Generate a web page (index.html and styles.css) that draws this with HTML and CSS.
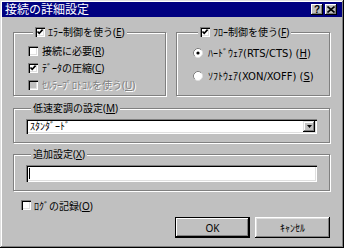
FILE: index.html
```html
<!DOCTYPE html>
<html lang="ja">
<head>
<meta charset="utf-8">
<link rel="stylesheet" href="styles.css">
</head>
<body>
<div class="window">
  <div class="titlebar">
    <span class="title">接続の詳細設定</span>
    <div class="tbtns">
      <span class="tbtn help">?</span>
      <span class="tbtn close"><svg width="8" height="7" viewBox="0 0 8 7"><path d="M0.5 0.5 L7.5 6.5 M7.5 0.5 L0.5 6.5" stroke="#000" stroke-width="1.6"/></svg></span>
    </div>
  </div>
  <div class="body">
    <div class="row">
      <fieldset class="group g1">
        <legend><span class="cb"><svg viewBox="0 0 10 10"><path d="M2.5 4.5 L4.2 6.4 L7.6 2.6" fill="none" stroke="#000" stroke-width="1.6"/></svg></span><span class="lbl">ｴﾗｰ制御を使う(<u>E</u>)</span></legend>
        <div class="item"><span class="cb"></span><span class="lbl">接続に必要(<u>R</u>)</span></div>
        <div class="item"><span class="cb"><svg viewBox="0 0 10 10"><path d="M2.5 4.5 L4.2 6.4 L7.6 2.6" fill="none" stroke="#000" stroke-width="1.6"/></svg></span><span class="lbl">ﾃﾞｰﾀの圧縮(<u>C</u>)</span></div>
        <div class="item disabled"><span class="cb off"></span><span class="lbl">ｾﾙﾗｰﾌﾟﾛﾄｺﾙを使う(<u>U</u>)</span></div>
      </fieldset>
      <fieldset class="group g2">
        <legend><span class="cb"><svg viewBox="0 0 10 10"><path d="M2.5 4.5 L4.2 6.4 L7.6 2.6" fill="none" stroke="#000" stroke-width="1.6"/></svg></span><span class="lbl">ﾌﾛｰ制御を使う(<u>F</u>)</span></legend>
        <div class="radio-item"><svg class="rb" viewBox="0 0 10 10"><circle cx="5" cy="5" r="4.5" fill="#fff"/><path d="M1.82 8.18 A4.5 4.5 0 0 1 8.18 1.82" fill="none" stroke="#808080"/><path d="M8.18 1.82 A4.5 4.5 0 0 1 1.82 8.18" fill="none" stroke="#dfdfdf"/><circle cx="5" cy="5" r="1.6" fill="#000"/></svg><span class="lbl">ﾊｰﾄﾞｳｪｱ(RTS/CTS) (<u>H</u>)</span></div>
        <div class="radio-item"><svg class="rb" viewBox="0 0 10 10"><circle cx="5" cy="5" r="4.5" fill="#fff"/><path d="M1.82 8.18 A4.5 4.5 0 0 1 8.18 1.82" fill="none" stroke="#808080"/><path d="M8.18 1.82 A4.5 4.5 0 0 1 1.82 8.18" fill="none" stroke="#dfdfdf"/></svg><span class="lbl">ｿﾌﾄｳｪｱ(XON/XOFF) (<u>S</u>)</span></div>
      </fieldset>
    </div>
    <fieldset class="group g3">
      <legend><span class="lbl">低速変調の設定(<u>M</u>)</span></legend>
      <div class="select">
        <span class="select-text">ｽﾀﾝﾀﾞｰﾄﾞ</span>
        <span class="select-btn"><svg width="5" height="3" viewBox="0 0 5 3"><path d="M0 0 H5 L2.5 3 Z" fill="#000"/></svg></span>
      </div>
    </fieldset>
    <fieldset class="group g4">
      <legend><span class="lbl">追加設定(<u>X</u>)</span></legend>
      <div class="textbox"><span class="caret"></span></div>
    </fieldset>
    <div class="logrow"><span class="cb"></span><span class="lbl">ﾛｸﾞの記録(<u>O</u>)</span></div>
    <div class="buttons">
      <button class="btn default">OK</button>
      <button class="btn">ｷｬﾝｾﾙ</button>
    </div>
  </div>
</div>
</body>
</html>
```

FILE: styles.css
```css
* { box-sizing: border-box; }
html, body { margin: 0; padding: 0; }
body {
  width: 344px;
  height: 248px;
  overflow: hidden;
  background: #c0c0c0;
  font-family: "Noto Sans", "Noto Sans CJK JP", sans-serif;
  font-size: 10px;
  color: #000;
}
u { text-decoration: underline; text-underline-offset: 1px; }
.lbl { white-space: nowrap; }

.window {
  width: 344px;
  height: 248px;
  padding: 2px;
  background: #c0c0c0;
  box-shadow: inset -1px -1px #000, inset 1px 1px #dfdfdf, inset -2px -2px #808080, inset 2px 2px #fff;
}

.titlebar {
  height: 15px;
  background: #000080;
  display: flex;
  align-items: center;
  justify-content: space-between;
  padding: 0 5px 0 3px;
}
.title {
  color: #fff;
  font-size: 12px;
  line-height: 15px;
}
.tbtns { display: flex; gap: 2px; }
.tbtn {
  width: 12px;
  height: 11px;
  background: #c0c0c0;
  box-shadow: inset -1px -1px #000, inset 1px 1px #fff, inset -2px -2px #808080;
  display: flex;
  align-items: center;
  justify-content: center;
}
.help {
  font-family: "Liberation Sans", sans-serif;
  font-weight: bold;
  font-size: 10px;
  line-height: 11px;
}
.close svg { display: block; }

.body {
  padding: 9px 12px 0 11px;
}
.row {
  display: flex;
  gap: 10px;
}

.group {
  margin: 0;
  padding: 0;
  min-width: 0;
  border: 1px solid #808080;
  box-shadow: inset 1px 1px #fff, 1px 1px #fff;
}
.group legend {
  margin-left: 5px;
  padding: 0 2px;
  height: 12px;
  line-height: 12px;
  background: #c0c0c0;
  display: flex;
  align-items: center;
  gap: 3px;
}

.g1 { width: 153px; height: 70px; padding: 4px 0 0 14px; }
.g2 { width: 154px; height: 70px; padding: 6px 0 0 16px; }
.g3 { margin-top: 6px; height: 41px; padding: 5px 12px 0 12px; }
.g4 { margin-top: 5px; height: 43px; padding: 5px 12px 0 12px; }

.cb {
  width: 10px;
  height: 10px;
  flex: none;
  background: #fff;
  box-shadow: inset 1px 1px #808080, inset 2px 2px #000, inset -1px -1px #fff, inset -2px -2px #dfdfdf;
}
.cb svg { display: block; width: 10px; height: 10px; }
.cb.off { background: #c0c0c0; }

.item {
  height: 17px;
  display: flex;
  align-items: center;
  gap: 4px;
}
.item.disabled {
  color: #808080;
  text-shadow: 1px 1px 0 #fff;
}

.radio-item {
  height: 17px;
  display: flex;
  align-items: center;
  gap: 5px;
  font-family: "DejaVu Sans", "Noto Sans CJK JP", sans-serif;
}
.radio-item + .radio-item { margin-top: 6px; }
.rb { width: 10px; height: 10px; flex: none; display: block; }

.select {
  height: 15px;
  background: #fff;
  display: flex;
  align-items: stretch;
  padding: 2px;
  box-shadow: inset 1px 1px #808080, inset 2px 2px #000, inset -1px -1px #fff, inset -2px -2px #dfdfdf;
}
.select-text {
  flex: 1;
  line-height: 11px;
  padding-left: 2px;
}
.select-btn {
  width: 12px;
  background: #c0c0c0;
  box-shadow: inset -1px -1px #000, inset 1px 1px #dfdfdf, inset -2px -2px #808080, inset 2px 2px #fff;
  display: flex;
  align-items: center;
  justify-content: center;
}
.select-btn svg { display: block; }

.textbox {
  height: 17px;
  background: #fff;
  padding: 3px 3px;
  display: flex;
  box-shadow: inset 1px 1px #808080, inset 2px 2px #000, inset -1px -1px #fff, inset -2px -2px #dfdfdf;
}
.caret {
  width: 1px;
  height: 11px;
  background: #000;
}

.logrow {
  margin-top: 8px;
  margin-left: 8px;
  height: 12px;
  display: flex;
  align-items: center;
  gap: 3px;
}

.buttons {
  margin-top: 6px;
  display: flex;
  justify-content: flex-end;
  gap: 5px;
}
.btn {
  width: 75px;
  height: 21px;
  padding: 0;
  border: none;
  background: #c0c0c0;
  font-family: "Noto Sans", "Noto Sans CJK JP", sans-serif;
  font-size: 10px;
  color: #000;
  box-shadow: inset -1px -1px #000, inset 1px 1px #fff, inset -2px -2px #808080, inset 2px 2px #dfdfdf;
}
.btn.default {
  box-shadow: inset 0 0 0 1px #000, inset -2px -2px #000, inset 2px 2px #fff, inset -3px -3px #808080;
}
```
